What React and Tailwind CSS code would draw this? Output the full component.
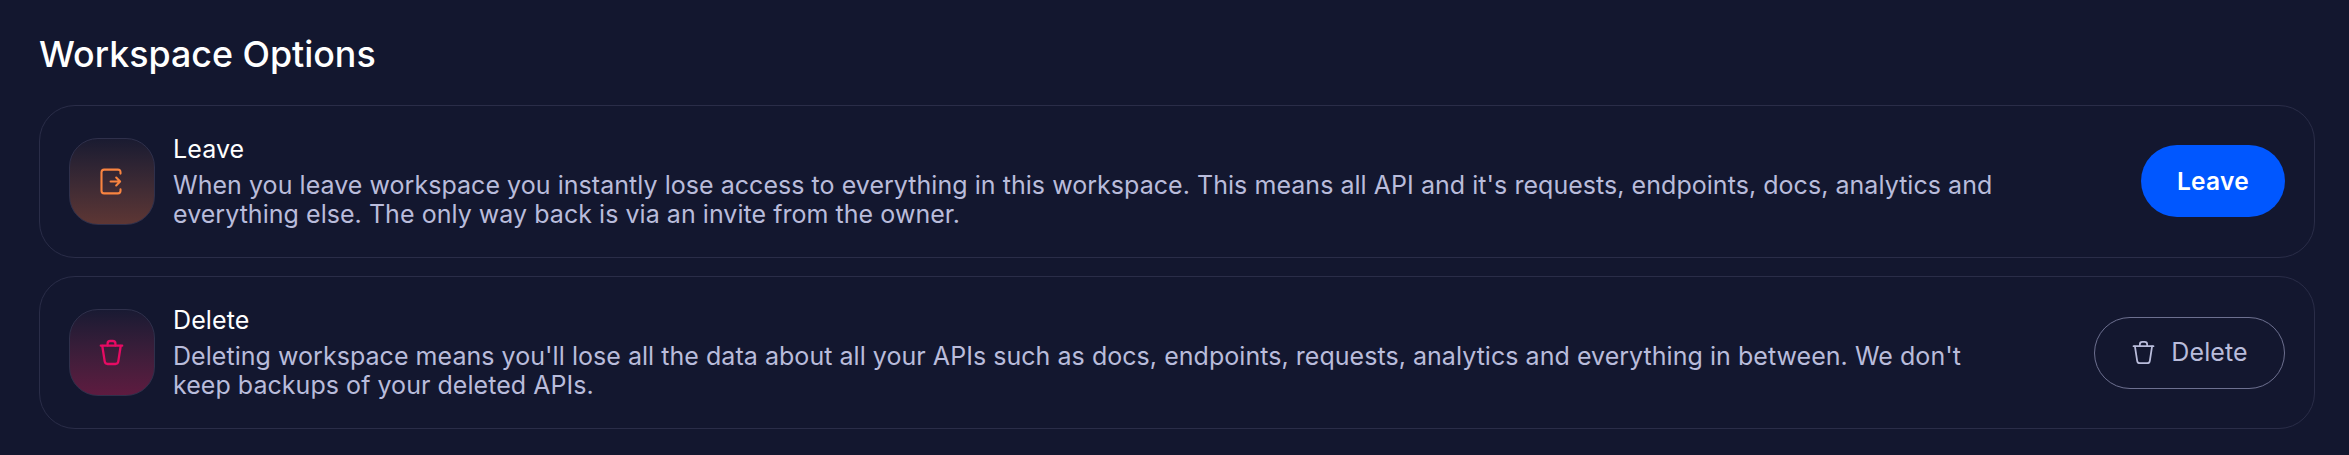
function LeaveIcon({ className }) {
  return (
    <svg className={className} viewBox="0 0 29 29" fill="none" stroke="currentColor" strokeWidth="2.1" strokeLinecap="round" strokeLinejoin="round">
      <path d="M23.5 6.6V5.2Q23.5 2.6 20.9 2.6H7.1Q4.5 2.6 4.5 5.2V23.8Q4.5 26.4 7.1 26.4H20.9Q23.5 26.4 23.5 23.8V22.4" />
      <path d="M13.6 14.5H23M19.2 10.6L23.1 14.5L19.2 18.4" />
    </svg>
  );
}

function TrashIcon({ className, strokeWidth }) {
  return (
    <svg className={className} viewBox="0 0 29 29" fill="none" stroke="currentColor" strokeWidth={strokeWidth} strokeLinecap="round" strokeLinejoin="round">
      <path d="M3.8 7.7H25.2" />
      <path d="M10.6 7.5V5.6Q10.6 3 13.2 3H15.8Q18.4 3 18.4 5.6V7.5" />
      <path d="M5.3 8L7.7 23.4Q8.1 26 10.7 26H18.3Q20.9 26 21.3 23.4L23.7 8" />
    </svg>
  );
}

function OptionCard({ title, text, tile, icon, children }) {
  return (
    <section className="flex h-[153px] items-center rounded-[36px] border border-[#2a2d48] pl-[29px] pr-[29px]">
      <div className={`flex h-[87px] w-[86px] shrink-0 items-center justify-center rounded-[29px] border border-[#2f304b] bg-linear-to-b pr-[2px] ${tile}`}>
        {icon}
      </div>
      <div className="ml-[18px] w-[1840px] shrink-0">
        <h2 className="text-[25px] leading-[29px] tracking-[0.1px] text-white">{title}</h2>
        <p className="mt-[7px] text-[25px] leading-[28.5px] tracking-[0.042px] text-[#b9bcdb]">{text}</p>
      </div>
      <div className="ml-auto shrink-0">{children}</div>
    </section>
  );
}

export default function App() {
  return (
    <main className="h-[455px] w-full overflow-hidden bg-[#13172f] pl-[39px] pr-[34px] pt-[33px] font-['Inter',sans-serif]">
      <h1 className="h-[72px] text-[35.8px] leading-[42px] font-medium text-white">Workspace Options</h1>
      <div className="flex flex-col gap-[18px]">
        <OptionCard
          title="Leave"
          text="When you leave workspace you instantly lose access to everything in this workspace. This means all API and it's requests, endpoints, docs, analytics and everything else. The only way back is via an invite from the owner."
          tile="from-[#1a1b31] to-[#5d3634]"
          icon={<LeaveIcon className="size-[29px] text-[#f98440]" />}
        >
          <button className="mb-px flex h-[72px] w-[144px] items-center justify-center rounded-full bg-[#0057ff] text-[24.5px] font-semibold tracking-[0.3px] text-white">Leave</button>
        </OptionCard>
        <OptionCard
          title="Delete"
          text="Deleting workspace means you'll lose all the data about all your APIs such as docs, endpoints, requests, analytics and everything in between. We don't keep backups of your deleted APIs."
          tile="from-[#191a33] to-[#5e1b40]"
          icon={<TrashIcon className="size-[29px] text-[#e60b63]" strokeWidth="2.3" />}
        >
          <button className="flex h-[72px] w-[191px] items-center justify-center gap-[14px] rounded-full border border-[#6d7090] pr-px text-[25px] tracking-[0.1px] text-[#b9bcdb]">
            <TrashIcon className="size-[27px]" strokeWidth="1.9" />
            Delete
          </button>
        </OptionCard>
      </div>
    </main>
  );
}
